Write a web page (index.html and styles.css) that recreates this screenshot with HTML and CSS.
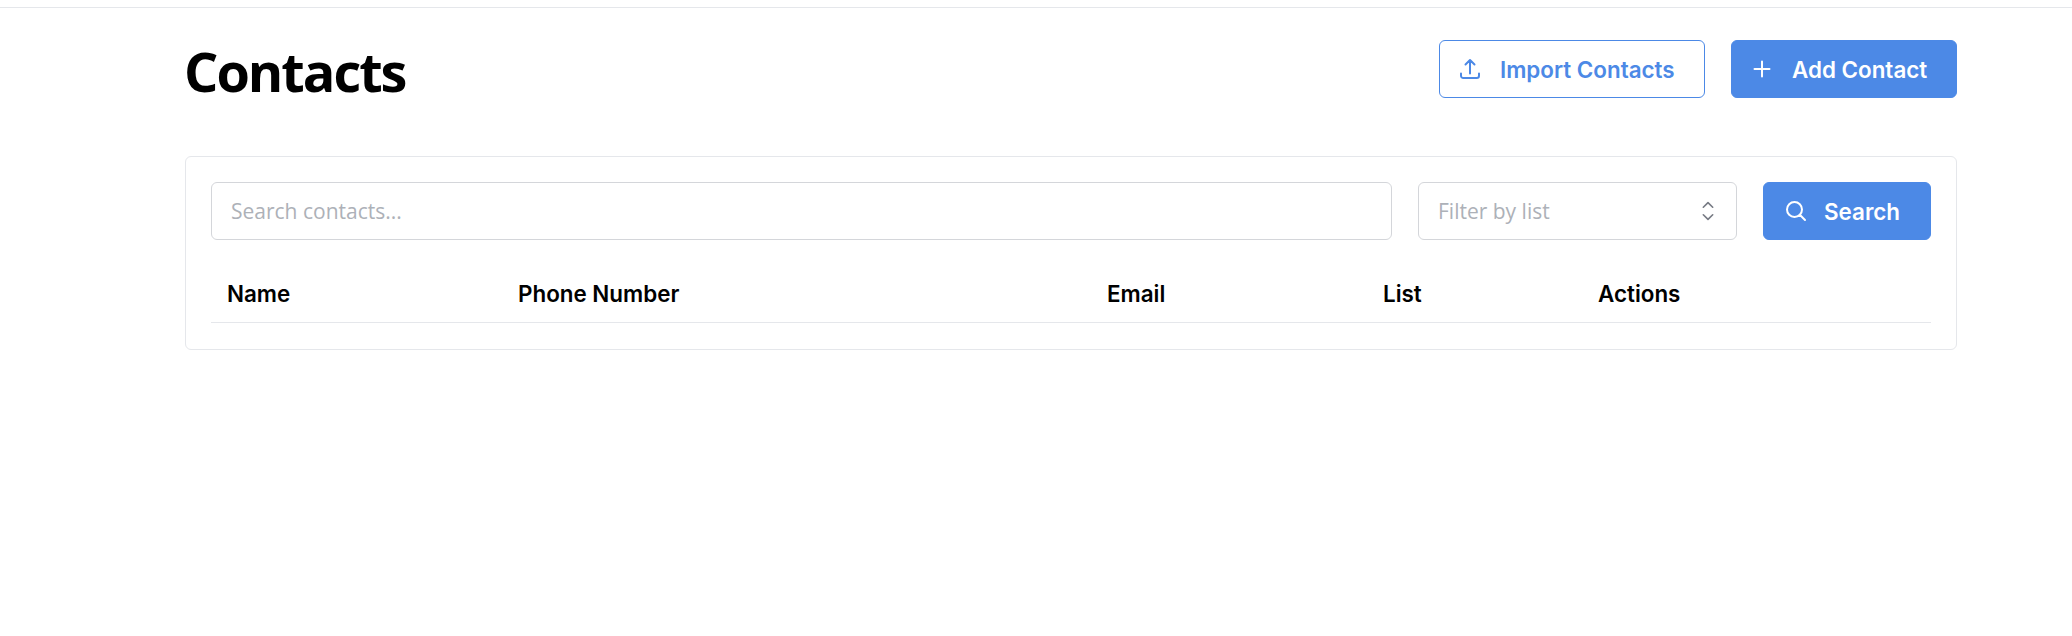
FILE: index.html
```html
<!DOCTYPE html>
<html lang="en">
<head>
<meta charset="utf-8">
<title>Contacts</title>
<link rel="stylesheet" href="styles.css">
</head>
<body>
<div class="topbar"></div>
<main class="page">
  <header class="head">
    <h1 class="title">Contacts</h1>
    <div class="actions">
      <button class="btn btn-outline" type="button">
        <svg class="icon" viewBox="0 0 24 24" fill="none" stroke="currentColor" stroke-width="2" stroke-linecap="round" stroke-linejoin="round"><path d="M3 16.5v2.25A2.25 2.25 0 0 0 5.25 21h13.5A2.25 2.25 0 0 0 21 18.75V16.5m-13.5-9L12 3m0 0 4.5 4.5M12 3v13.5"/></svg>
        <span>Import Contacts</span>
      </button>
      <button class="btn btn-solid" type="button">
        <svg class="icon" viewBox="0 0 24 24" fill="none" stroke="currentColor" stroke-width="2" stroke-linecap="round" stroke-linejoin="round"><path d="M12 4.5v15m7.5-7.5h-15"/></svg>
        <span>Add Contact</span>
      </button>
    </div>
  </header>
  <section class="card">
    <div class="filters">
      <input class="field search-field" type="text" placeholder="Search contacts...">
      <div class="field select-field">
        <span class="select-label">Filter by list</span>
        <svg class="chevrons" viewBox="0 0 24 24" fill="none" stroke="currentColor" stroke-width="1.3" stroke-linecap="round" stroke-linejoin="round"><path d="M8.25 15 12 18.75 15.75 15m-7.5-6L12 5.25 15.75 9"/></svg>
      </div>
      <button class="btn btn-solid btn-search" type="button">
        <svg class="icon" viewBox="0 0 24 24" fill="none" stroke="currentColor" stroke-width="2" stroke-linecap="round" stroke-linejoin="round"><path d="m21 21-5.197-5.197m0 0A7.5 7.5 0 1 0 5.196 5.196a7.5 7.5 0 0 0 10.607 10.607Z"/></svg>
        <span>Search</span>
      </button>
    </div>
    <table class="table">
      <thead>
        <tr>
          <th class="col-name">Name</th>
          <th class="col-phone">Phone Number</th>
          <th class="col-email">Email</th>
          <th class="col-list">List</th>
          <th class="col-actions">Actions</th>
        </tr>
      </thead>
    </table>
  </section>
</main>
</body>
</html>
```
FILE: styles.css
```css
* { box-sizing: border-box; }
html, body { margin: 0; padding: 0; background: #fff; }
body { height: 636px; overflow: hidden; font-family: "Inter", sans-serif; color: #000; }
.topbar { height: 8px; border-bottom: 1px solid #e5e7eb; }
.page { margin: 0 115px 0 185px; }
.head { display: flex; justify-content: space-between; align-items: flex-start; padding-top: 32px; height: 148px; }
.title { margin: 0 0 0 -1px; font-family: "Open Sans", sans-serif; font-size: 54px; font-weight: 700; line-height: 62px; letter-spacing: -2px; }
.actions { display: flex; gap: 26px; }
.btn { display: inline-flex; align-items: center; height: 58px; border-radius: 6px; border: 1px solid #4c89e6; font-family: "Inter", sans-serif; font-size: 22.4px; font-weight: 600; cursor: pointer; }
.btn-outline { background: #fff; color: #4c89e6; padding: 0 0 0 18px; gap: 18px; width: 266px; }
.btn-solid { background: #4c89e6; color: #fff; padding: 0 0 0 18px; gap: 18px; width: 226px; }
.icon { width: 24px; height: 24px; flex: none; }
.card { height: 194px; border: 1px solid #e5e7eb; border-radius: 6px; padding: 25px 25px 0; }
.filters { display: flex; gap: 26px; }
.field { height: 58px; border: 1.5px solid #d4d6da; border-radius: 6px; background: #fff; font-family: "Open Sans", sans-serif; font-size: 21px; }
.search-field { flex: 1; min-width: 0; padding: 0 19px; outline: none; color: #000; }
.search-field::placeholder { color: #adb1b8; opacity: 1; }
.select-field { width: 319px; display: flex; align-items: center; justify-content: space-between; padding: 0 13px 0 19px; color: #adb1b8; }
.chevrons { width: 30px; height: 30px; color: #777b84; }
.btn-search { width: 168px; padding: 0 0 0 20px; gap: 16px; }
.table { width: 100%; margin-top: 26px; border-collapse: collapse; table-layout: fixed; }
.table th { height: 56px; padding: 0 0 0 16px; text-align: left; font-size: 22.4px; font-weight: 600; border-bottom: 1px solid #e5e7eb; }
.col-name { width: 291px; }
.col-phone { width: 589px; }
.col-email { width: 276px; }
.col-list { width: 215px; }
```
